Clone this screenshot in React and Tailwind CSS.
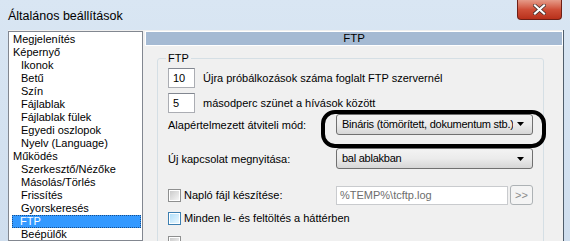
import React from 'react';

const treeItems = [
  { label: 'Megjelenítés', level: 0 },
  { label: 'Képernyő', level: 0 },
  { label: 'Ikonok', level: 1 },
  { label: 'Betű', level: 1 },
  { label: 'Szín', level: 1 },
  { label: 'Fájlablak', level: 1 },
  { label: 'Fájlablak fülek', level: 1 },
  { label: 'Egyedi oszlopok', level: 1 },
  { label: 'Nyelv (Language)', level: 1 },
  { label: 'Működés', level: 0 },
  { label: 'Szerkesztő/Nézőke', level: 1 },
  { label: 'Másolás/Törlés', level: 1 },
  { label: 'Frissítés', level: 1 },
  { label: 'Gyorskeresés', level: 1 },
  { label: 'FTP', level: 1, selected: true },
  { label: 'Beépülők', level: 1 },
];

const Checkbox = ({ hover }) => (
  <div
    className={
      hover
        ? 'w-[13px] h-[13px] shrink-0 border border-[#3c7fb1] p-[1px] bg-white'
        : 'w-[13px] h-[13px] shrink-0 border border-[#8e8f8f] p-[1px] bg-white'
    }
  >
    <div
      className={
        hover
          ? 'w-full h-full bg-gradient-to-br from-[#b1dffa] to-[#e9f7fe]'
          : 'w-full h-full bg-gradient-to-br from-[#cbcbcb] to-[#f6f6f6]'
      }
    />
  </div>
);

const Combo = ({ text }) => (
  <div className="w-[197px] h-[21px] rounded-[3px] border border-[#707070] bg-gradient-to-b from-[#f3f3f3] via-[#ebebeb] to-[#d6d6d6] flex items-center pl-[5px] pr-[8px]">
    <span className="flex-1 whitespace-nowrap overflow-hidden tracking-[-0.25px]">{text}</span>
    <svg width="7" height="4" viewBox="0 0 7 4" className="shrink-0 ml-[4px]">
      <polygon points="0,0 7,0 3.5,4" fill="#000" />
    </svg>
  </div>
);

const NumInput = ({ value }) => (
  <div className="w-[27px] h-[20px] border border-[#abadb3] border-t-[#828790] bg-white flex items-center pl-[4px]">
    {value}
  </div>
);

export default function App() {
  return (
    <div className="relative w-[570px] h-[241px] overflow-hidden bg-gradient-to-b from-[#d9e6f3] to-[#cfdeee] text-[11px] leading-[13px] text-black font-['Liberation_Sans',Arial,sans-serif]">
      {/* Title bar */}
      <div className="h-[30px] flex items-start justify-between pl-[8px] pr-[8px]">
        <span className="mt-[9px] text-[12.5px] leading-[15px] text-black">Általános beállítások</span>
        <div className="w-[45px] h-[20px] rounded-b-[4px] border border-t-0 border-[#6e1f16] bg-gradient-to-b from-[#e59a88] via-[#cf4f38] to-[#b8301a] flex items-center justify-center">
          <svg width="13" height="11" viewBox="0 0 13 11">
            <path d="M2 1.5 L11 9.5 M11 1.5 L2 9.5" stroke="#3b2a28" strokeWidth="3.6" strokeLinecap="square" />
            <path d="M2 1.5 L11 9.5 M11 1.5 L2 9.5" stroke="#fff" strokeWidth="2.2" strokeLinecap="square" />
          </svg>
        </div>
      </div>

      {/* Client area */}
      <div className="flex h-[211px] pl-[8px] pr-[6px]">
        <div className="flex-1 flex bg-[#f0f0f0] border-r border-[#4f5d6b] pt-[1px]">
          {/* Tree */}
          <div className="w-[135px] h-full border border-[#828790] bg-white pt-[1px] pl-[3px] pr-[1px]">
            {treeItems.map((item, i) => (
              <div
                key={i}
                className={
                  item.selected
                    ? 'h-[13px] pl-[8px] bg-[#3399ff] text-white outline outline-1 outline-dotted outline-[#1a4f8a] -outline-offset-1'
                    : item.level === 0
                    ? 'h-[13px] pl-[1px]'
                    : 'h-[13px] pl-[9px]'
                }
              >
                {item.label}
              </div>
            ))}
          </div>

          {/* Right panel */}
          <div className="ml-[2px] flex-1 flex flex-col">
            <div className="h-[19px] border border-white bg-[#a5bad3] flex items-center justify-center text-[11.5px]">
              FTP
            </div>

            <div className="mt-[12px] ml-[12px] mr-[19px] relative border border-[#d5dfe5] rounded-[3px] pt-[9px] pl-[10px] h-[200px]">
              <span className="absolute -top-[7px] left-[8px] px-[2px] bg-[#f0f0f0]">FTP</span>

              <div className="flex items-center gap-[8px] h-[20px]">
                <NumInput value="10" />
                <span>Újra próbálkozások száma foglalt FTP szervernél</span>
              </div>

              <div className="flex items-center gap-[8px] h-[20px] mt-[5px]">
                <NumInput value="5" />
                <span>másodperc szünet a hívások között</span>
              </div>

              <div className="flex items-center h-[22px]">
                <span className="w-[168px] mt-[2px]">Alapértelmezett átviteli mód:</span>
                <Combo text="Bináris (tömörített, dokumentum stb.)" />
              </div>

              <div className="flex items-center h-[21px] mt-[13px]">
                <span className="w-[168px] mt-[1px]">Új kapcsolat megnyitása:</span>
                <Combo text="bal ablakban" />
              </div>

              <div className="flex items-center h-[20px] mt-[16px]">
                <div className="w-[168px] flex items-center gap-[3px]">
                  <Checkbox />
                  <span>Napló fájl készítése:</span>
                </div>
                <div className="w-[172px] h-[19px] border border-[#c9cbce] bg-white flex items-center pl-[3px] text-[#6d6d6d]">
                  %TEMP%\tcftp.log
                </div>
                <div className="ml-[2px] w-[23px] h-[20px] rounded-[3px] border border-[#adb2b5] bg-[#f4f4f4] flex items-center justify-center text-[#8a8a8a]">
                  &gt;&gt;
                </div>
              </div>

              <div className="flex items-center gap-[3px] h-[14px] mt-[6px]">
                <Checkbox hover />
                <span>Minden le- és feltöltés a háttérben</span>
              </div>

              <div className="flex items-start h-[14px] mt-[11px]">
                <Checkbox />
              </div>
            </div>
          </div>
        </div>
      </div>

      {/* Annotation */}
      <div className="absolute left-[321px] top-[110px] w-[225px] h-[38px] border-[4px] border-black rounded-[14px] pointer-events-none" />
    </div>
  );
}
